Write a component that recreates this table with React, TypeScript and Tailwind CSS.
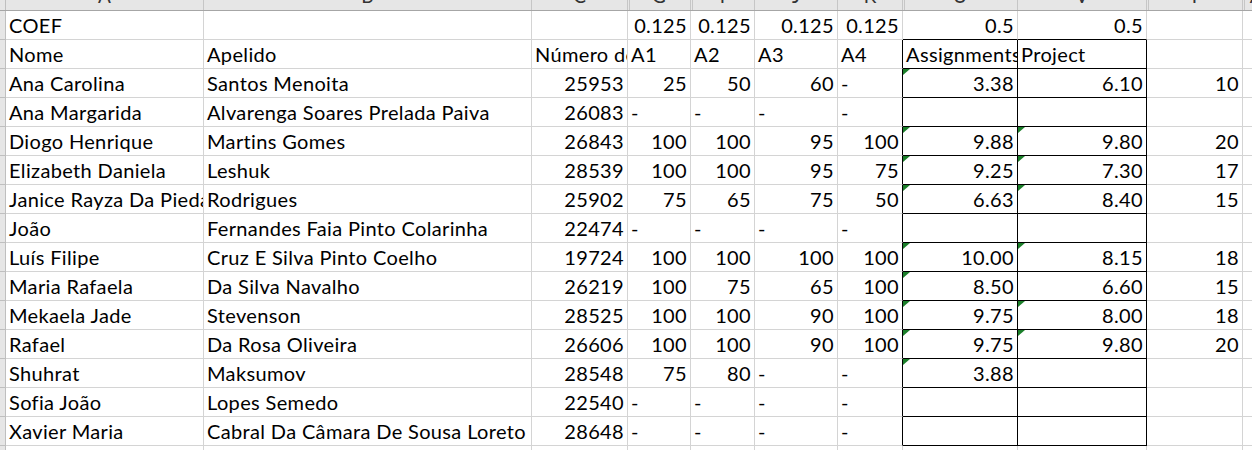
import React from 'react';

// column widths include the 1px gridline on the right
const cols = [
  { w: 'w-[198px]', letter: 'A', dbl: false },
  { w: 'w-[328px]', letter: 'B', dbl: false },
  { w: 'w-[96px]', letter: 'C', dbl: false },
  { w: 'w-[63px]', letter: 'G', dbl: true },
  { w: 'w-[64px]', letter: 'I', dbl: true },
  { w: 'w-[83px]', letter: 'J', dbl: false },
  { w: 'w-[65px]', letter: 'K', dbl: false },
  { w: 'w-[115px]', letter: 'U', dbl: true },
  { w: 'w-[129px]', letter: 'V', dbl: false },
  { w: 'w-[96px]', letter: 'Y', dbl: true },
  { w: 'w-[40px]', letter: 'AA', dbl: true },
];

type Row = { cells: string[]; tri?: [boolean, boolean] };

const rows: Row[] = [
  { cells: ['COEF', '', '', '0.125', '0.125', '0.125', '0.125', '0.5', '0.5', '', ''] },
  { cells: ['Nome', 'Apelido', 'Número de aluno', 'A1', 'A2', 'A3', 'A4', 'Assignments', 'Project', '', ''] },
  { cells: ['Ana Carolina', 'Santos Menoita', '25953', '25', '50', '60', '-', '3.38', '6.10', '10', ''], tri: [true, false] },
  { cells: ['Ana Margarida', 'Alvarenga Soares Prelada Paiva', '26083', '-', '-', '-', '-', '', '', '', ''] },
  { cells: ['Diogo Henrique', 'Martins Gomes', '26843', '100', '100', '95', '100', '9.88', '9.80', '20', ''], tri: [true, true] },
  { cells: ['Elizabeth Daniela', 'Leshuk', '28539', '100', '100', '95', '75', '9.25', '7.30', '17', ''], tri: [true, true] },
  { cells: ['Janice Rayza Da Piedade', 'Rodrigues', '25902', '75', '65', '75', '50', '6.63', '8.40', '15', ''], tri: [true, true] },
  { cells: ['João', 'Fernandes Faia Pinto Colarinha', '22474', '-', '-', '-', '-', '', '', '', ''] },
  { cells: ['Luís Filipe', 'Cruz E Silva Pinto Coelho', '19724', '100', '100', '100', '100', '10.00', '8.15', '18', ''], tri: [true, true] },
  { cells: ['Maria Rafaela', 'Da Silva Navalho', '26219', '100', '75', '65', '100', '8.50', '6.60', '15', ''], tri: [true, false] },
  { cells: ['Mekaela Jade', 'Stevenson', '28525', '100', '100', '90', '100', '9.75', '8.00', '18', ''], tri: [true, true] },
  { cells: ['Rafael', 'Da Rosa Oliveira', '26606', '100', '100', '90', '100', '9.75', '9.80', '20', ''], tri: [true, true] },
  { cells: ['Shuhrat', 'Maksumov', '28548', '75', '80', '-', '-', '3.88', '', '', ''], tri: [true, false] },
  { cells: ['Sofia João', 'Lopes Semedo', '22540', '-', '-', '-', '-', '', '', '', ''] },
  { cells: ['Xavier Maria', 'Cabral Da Câmara De Sousa Loreto', '28648', '-', '-', '-', '-', '', '', '', ''] },
  { cells: ['', '', '', '', '', '', '', '', '', '', ''] },
];

const isNum = (v: string) => /^[\d.]+$/.test(v);

function Triangle() {
  return (
    <svg className="absolute top-0 left-0" width="7" height="7" viewBox="0 0 7 7">
      <polygon points="0,0 7,0 0,6" fill="#1b7f2a" />
    </svg>
  );
}

export default function App() {
  return (
    <div className="w-[1252px] h-[450px] overflow-hidden bg-white text-black font-['Lato','Liberation_Sans',sans-serif]">
      {/* column header strip, mostly scrolled off */}
      <div className="flex h-[11px] bg-[#e6e6e6] border-b border-[#a6a6a6]">
        <div className="w-[6px] shrink-0 border-r border-[#bfbfbf]" />
        {cols.map((c, i) => (
          <div
            key={i}
            className={`${c.w} shrink-0 overflow-hidden border-r border-[#c6c6c6] text-center text-[#333] ${c.dbl ? 'shadow-[inset_1px_0_0_0_#e6e6e6,inset_2px_0_0_0_#c6c6c6]' : ''}`}
          >
            <span className="block -mt-[14px] text-[19px] leading-[20px]">{c.letter}</span>
          </div>
        ))}
      </div>

      {rows.map((r, ri) => (
        <div key={ri} className="flex h-[29px]">
          <div className="w-[6px] shrink-0 bg-[#e6e6e6] border-r border-b border-[#bfbfbf]" />
          {r.cells.map((v, ci) => {
            const boxed = ri >= 1 && ri <= 14;
            let border = 'border-r border-b border-[#d4d4d4]';
            if (ri === 0 && (ci === 7 || ci === 8)) border += ' border-b-black';
            if (boxed && ci === 6) border += ' border-r-black';
            if (boxed && (ci === 7 || ci === 8)) border += ' border-r-black border-b-black';
            const right = isNum(v);
            const tri = r.tri && ((ci === 7 && r.tri[0]) || (ci === 8 && r.tri[1]));
            return (
              <div
                key={ci}
                className={`${cols[ci].w} shrink-0 relative overflow-hidden whitespace-nowrap ${border} ${right ? 'text-right pr-[3px]' : 'text-left pl-[3px]'} text-[20px] leading-[28px] tracking-[0.35px]`}
              >
                {tri && <Triangle />}
                {v}
              </div>
            );
          })}
        </div>
      ))}
    </div>
  );
}
